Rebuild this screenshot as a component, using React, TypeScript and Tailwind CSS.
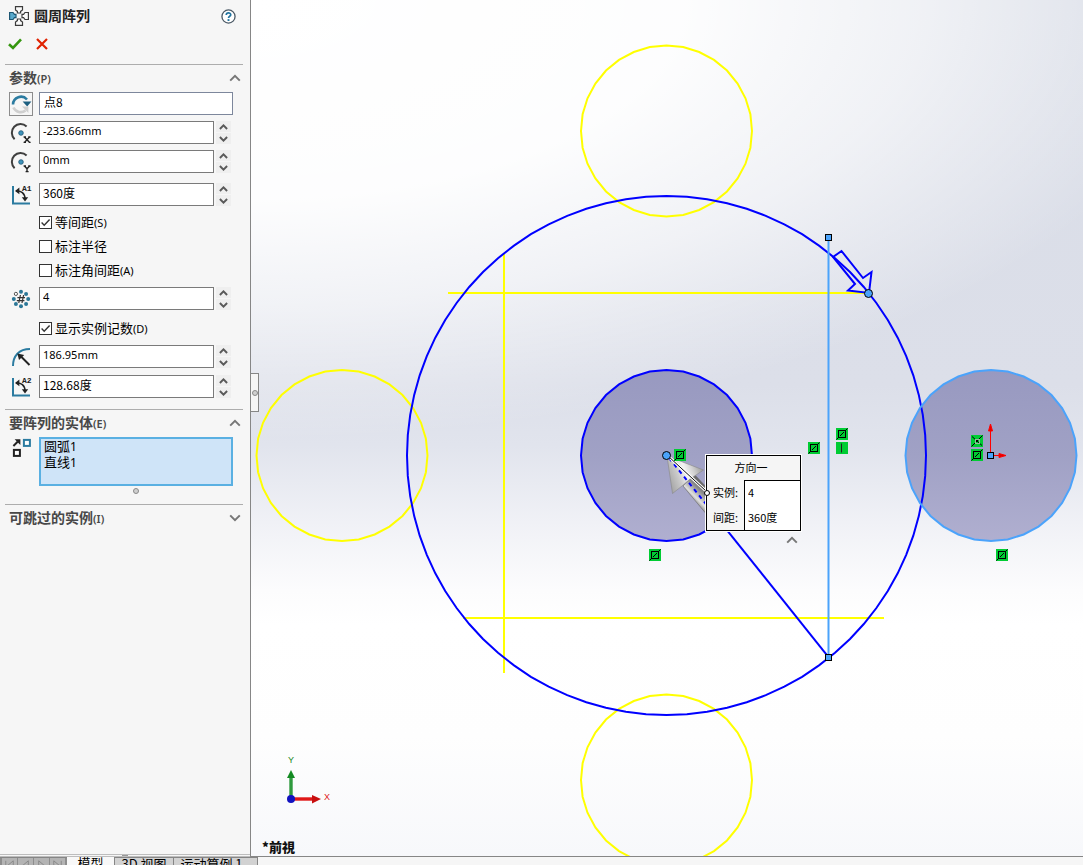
import React, { useState } from "react";

const UI_FONT = "font-['Noto_Sans','Noto_Sans_CJK_SC',sans-serif]";
const CJK_FONT = "font-['Noto_Sans_CJK_SC',sans-serif]";

/* ---------- small glyphs ---------- */

function Chevron({ up, small }: { up?: boolean; small?: boolean }) {
  return (
    <svg
      viewBox="0 0 12 8"
      className={small ? "h-[6px] w-[9px]" : "h-[8px] w-[12px]"}
      fill="none"
      stroke={small ? "#5a5a5a" : "#777777"}
      strokeWidth={small ? 2.6 : 2}
      aria-hidden="true"
    >
      <path d={up ? "M1.2 6.6L6 1.8L10.8 6.6" : "M1.2 1.4L6 6.2L10.8 1.4"} />
    </svg>
  );
}

function PatternIcon() {
  return (
    <svg viewBox="0 0 22 22" className="h-[22px] w-[22px]" fill="#fbfbfb" stroke="#3c3c3c" strokeWidth="1.2" aria-hidden="true">
      <path d="M7.5 1.6H14.5V5L12.6 6.4V8H9.4V6.4L7.5 5Z" />
      <path d="M7.5 20.4H14.5V17L12.6 15.6V14H9.4V15.6L7.5 17Z" />
      <path d="M20.4 7.5V14.5H17L15.6 12.6H14V9.4H15.6L17 7.5Z" />
      <path d="M1.6 7.5V14.5H5L6.4 12.6H8V9.4H6.4L5 7.5Z" fill="#58a9cc" stroke="#1d5673" />
    </svg>
  );
}

function RotateIcon() {
  return (
    <svg viewBox="0 0 22 22" className="h-[22px] w-[22px]" fill="none" aria-hidden="true">
      <path d="M3 11.5A8 8 0 0 1 17 6.5" stroke="#2b7ba0" strokeWidth="2.6" />
      <path d="M12.6 8.5H21.4L17.2 13.4Z" fill="#1d5f80" />
      <path d="M3.4 14.5A8 8 0 0 0 15.6 17.4" stroke="#cfcfcf" strokeWidth="2.6" />
      <path d="M12 13.6H18.4V20Z" fill="#cfcfcf" />
    </svg>
  );
}

function CenterIcon({ axis }: { axis: "X" | "Y" }) {
  return (
    <svg viewBox="0 0 22 22" className="h-[22px] w-[22px]" fill="none" aria-hidden="true">
      <path d="M4.6 17.2A8.2 8.2 0 0 1 16.6 4.4" stroke="#3f3f3f" strokeWidth="2" />
      <circle cx="11" cy="11" r="2.3" fill="#3f93bb" stroke="#1d5673" strokeWidth="0.8" />
      {axis === "X" ? (
        <path d="M14.4 15L19.6 20.4M19.6 15L14.4 20.4M13.6 15H16M18.2 15H20.6M13.6 20.4H16M18.2 20.4H20.6" stroke="#222" strokeWidth="1.4" />
      ) : (
        <path d="M14.4 15L17 17.8L19.6 15M17 17.5V20.8M13.6 15H16M18.2 15H20.6M15.6 20.6H18.6" stroke="#222" strokeWidth="1.4" />
      )}
    </svg>
  );
}

function AngleIcon({ index }: { index: string }) {
  return (
    <svg viewBox="0 0 22 22" className="h-[22px] w-[22px]" fill="none" aria-hidden="true">
      <path d="M3 2V19.5H20" stroke="#2b7ba0" strokeWidth="2" />
      <path d="M6 7C11 6.5 15 9 15 15" stroke="#222" strokeWidth="1.6" />
      <path d="M5 7L9.4 3.6V10.2Z" fill="#222" />
      <path d="M15 17.6L11.8 13.2H18.2Z" fill="#222" />
      <text x="12" y="7.4" fontSize="8" fontWeight="700" fill="#222" fontFamily="Liberation Mono, monospace">
        {"A" + index}
      </text>
    </svg>
  );
}

function CountIcon() {
  const dots = [0, 45, 90, 135, 180, 270, 315];
  return (
    <svg viewBox="0 0 22 22" className="h-[22px] w-[22px]" fill="none" aria-hidden="true">
      {dots.map((d) => (
        <circle
          key={d}
          cx={11 + 7.2 * Math.cos((d * Math.PI) / 180)}
          cy={11 + 7.2 * Math.sin((d * Math.PI) / 180)}
          r="2"
          fill="#2b7797"
        />
      ))}
      <circle cx="5.9" cy="5.9" r="1.6" fill="#fff" stroke="#555" />
      <path d="M10.4 7L8.8 15M13.6 7L12 15M7.4 9.6H15M6.8 12.6H14.4" stroke="#333" strokeWidth="1.2" />
    </svg>
  );
}

function RadiusIcon() {
  return (
    <svg viewBox="0 0 22 22" className="h-[22px] w-[22px]" fill="none" aria-hidden="true">
      <path d="M3 20C3 10 9 3 20 3" stroke="#2b7ba0" strokeWidth="2" />
      <path d="M19.5 19L11 10.5" stroke="#222" strokeWidth="2" />
      <path d="M7.4 7.4L14.2 9L9 14Z" fill="#222" />
    </svg>
  );
}

function EntitiesIcon() {
  return (
    <svg viewBox="0 0 22 22" className="h-[22px] w-[22px]" fill="none" aria-hidden="true">
      <path d="M3.4 9L7.6 4.8" stroke="#222" strokeWidth="2" />
      <path d="M4.6 2.2H10.4V8Z" fill="#222" />
      <rect x="13.9" y="2.9" width="6" height="6" fill="#fff" stroke="#2b7ba0" strokeWidth="2" />
      <rect x="3.9" y="12.9" width="6" height="6" fill="#fff" stroke="#222" strokeWidth="2" />
    </svg>
  );
}

/* ---------- property panel ---------- */

function Section({ title, hotkey, open, children }: { title: string; hotkey: string; open: boolean; children?: React.ReactNode }) {
  return (
    <section className="mr-[7px] ml-[5px] border-t border-[#adadad]">
      <button type="button" aria-expanded={open} className="flex h-[27px] w-full items-center justify-between pr-[2px] pb-px pl-[4px] text-left">
        <span className="text-[14px] leading-[20px] font-bold text-[#484848]">
          {title}
          <span className="text-[11px] font-semibold">({hotkey})</span>
        </span>
        <Chevron up={open} />
      </button>
      {children}
    </section>
  );
}

function NumberRow({ label, icon, initial, cjk, className = "" }: { label: string; icon: React.ReactNode; initial: string; cjk?: boolean; className?: string }) {
  const [value, setValue] = useState(initial);
  return (
    <div className={"flex h-[23px] items-center pr-[10px] pl-[4px] " + className}>
      <span className="mr-[6px] flex w-6 justify-center">{icon}</span>
      <input
        type="text"
        aria-label={label}
        value={value}
        onChange={(e) => setValue(e.target.value)}
        className={
          "h-[23px] min-w-0 flex-1 border border-[#7a7a7a] bg-white px-[3px] pb-[5px] text-black outline-none " +
          (cjk ? CJK_FONT + " text-[12px]" : "text-[11px]")
        }
      />
      <span className="ml-[2px] flex h-[23px] w-[17px] flex-col gap-px pr-[2px]">
        <button type="button" aria-label={label + " 增加"} className="flex flex-1 items-center justify-center bg-[#efefef]">
          <Chevron up small />
        </button>
        <button type="button" aria-label={label + " 减少"} className="flex flex-1 items-center justify-center bg-[#efefef]">
          <Chevron small />
        </button>
      </span>
    </div>
  );
}

function CheckRow({ label, hotkey, initial = false }: { label: string; hotkey?: string; initial?: boolean }) {
  const [checked, setChecked] = useState(initial);
  return (
    <label className="flex h-6 items-center gap-[3px] pl-[34px] text-[13px] leading-[18px] text-black">
      <span className="grid h-[13px] w-[13px]">
        <input
          type="checkbox"
          checked={checked}
          onChange={(e) => setChecked(e.target.checked)}
          className="col-start-1 row-start-1 h-[13px] w-[13px] appearance-none border border-[#333333] bg-white"
        />
        {checked && (
          <svg viewBox="0 0 13 13" className="pointer-events-none col-start-1 row-start-1 h-[13px] w-[13px]" fill="none" stroke="#333" strokeWidth="1.4" aria-hidden="true">
            <path d="M2.6 6.6L5.2 9.2L10.6 3.6" />
          </svg>
        )}
      </span>
      <span>
        {label}
        {hotkey && <span className="text-[11px]">({hotkey})</span>}
      </span>
    </label>
  );
}

function PropertyPanel() {
  const [point, setPoint] = useState("点8");
  return (
    <aside className="flex w-[251px] shrink-0 flex-col border-r border-[#868686] bg-[#f6f6f6]">
      <div className="flex-1">
        <header className="mb-2">
          <div className="flex h-8 items-center pr-[14px] pl-[8px]">
            <PatternIcon />
            <h1 className="ml-[4px] flex-1 text-[14px] leading-[20px] font-bold text-[#222]">圆周阵列</h1>
            <button type="button" aria-label="帮助">
              <svg viewBox="0 0 16 16" className="h-[15px] w-[15px]" fill="none" aria-hidden="true">
                <circle cx="8" cy="8" r="7" fill="#fff" stroke="#4c5a66" strokeWidth="1.4" />
                <path d="M5.6 6.3C5.6 3.4 10.4 3.4 10.4 6.2C10.4 7.8 8 7.8 8 9.6" stroke="#2475a0" strokeWidth="1.8" />
                <rect x="7" y="10.8" width="2" height="2" fill="#2475a0" />
              </svg>
            </button>
          </div>
          <div className="flex h-6 items-center gap-[14px] pl-[8px]">
            <button type="button" aria-label="确定">
              <svg viewBox="0 0 14 12" className="h-[12px] w-[14px]" fill="none" stroke="#35960f" strokeWidth="2.6" aria-hidden="true">
                <path d="M1 6.2L5 10L13 1.4" />
              </svg>
            </button>
            <button type="button" aria-label="取消">
              <svg viewBox="0 0 12 12" className="h-[12px] w-[12px]" fill="none" stroke="#e02200" strokeWidth="2.2" aria-hidden="true">
                <path d="M1 1L11 11M11 1L1 11" />
              </svg>
            </button>
          </div>
        </header>

        <Section title="参数" hotkey="P" open>
          <div className="flex h-[23px] items-center pr-[10px] pl-[4px]">
            <button type="button" aria-label="反向" className="mr-[6px] flex h-6 w-6 items-center justify-center border border-[#8c8c8c] bg-[#f6f6f6]">
              <RotateIcon />
            </button>
            <input
              type="text"
              aria-label="阵列中心"
              value={point}
              onChange={(e) => setPoint(e.target.value)}
              className={CJK_FONT + " h-[23px] min-w-0 flex-1 border border-[#7d879c] bg-white px-[4px] pb-[5px] text-[12px] text-black outline-none"}
            />
          </div>
          <NumberRow className="mt-[6px]" label="中心点 X" icon={<CenterIcon axis="X" />} initial="-233.66mm" />
          <NumberRow className="mt-[6px]" label="中心点 Y" icon={<CenterIcon axis="Y" />} initial="0mm" />
          <NumberRow className="mt-[10px] mb-[4px]" label="间距" icon={<AngleIcon index="1" />} initial="360度" cjk />
          <CheckRow label="等间距" hotkey="S" initial />
          <CheckRow label="标注半径" />
          <CheckRow label="标注角间距" hotkey="A" />
          <NumberRow className="mt-[5px] mb-[6px]" label="实例数" icon={<CountIcon />} initial="4" />
          <CheckRow label="显示实例记数" hotkey="D" initial />
          <NumberRow className="mt-[5px]" label="半径" icon={<RadiusIcon />} initial="186.95mm" />
          <NumberRow className="mt-[7px] mb-[11px]" label="圆弧角度" icon={<AngleIcon index="2" />} initial="128.68度" cjk />
        </Section>

        <Section title="要阵列的实体" hotkey="E" open>
          <div className="flex items-start pr-[10px] pl-[4px]">
            <span className="mr-[6px] flex w-6 justify-center">
              <EntitiesIcon />
            </span>
            <ul className="flex h-[49px] flex-1 flex-col border-2 border-[#5ab0e2] bg-[#cfe4f8] px-[3px] text-[13px] leading-[16px] text-black">
              <li className="-mt-px h-[16px]">
                圆弧<span className="text-[12px]">1</span>
              </li>
              <li className="h-[16px]">
                直线<span className="text-[12px]">1</span>
              </li>
            </ul>
          </div>
          <div className="mb-[9px] flex h-[9px] items-center justify-center pr-[10px] pl-[34px]">
            <span className="h-[6px] w-[6px] rounded-full border border-[#8a8a8a] bg-[#d0d0d0]" />
          </div>
        </Section>

        <Section title="可跳过的实例" hotkey="I" open={false} />
      </div>
      <div className="flex h-[3px] justify-center border-y border-[#bdbdbd]">
        <span className="h-px w-[6px] bg-[#999999]" />
      </div>
    </aside>
  );
}

/* ---------- sketch area ---------- */

function facets(cx: number, cy: number, r: number, n: number) {
  return Array.from({ length: n }, (_, i) => {
    const a = (2 * Math.PI * i) / n;
    return (cx + r * Math.cos(a)).toFixed(1) + "," + (cy + r * Math.sin(a)).toFixed(1);
  }).join(" ");
}

function Relation({ x, y, kind = "coincident" }: { x: number; y: number; kind?: "coincident" | "vertical" | "intersect" }) {
  return (
    <g transform={`translate(${x} ${y})`} fill="none" stroke="#000">
      <rect width="12" height="12" fill="#00cc33" stroke="none" />
      {kind === "coincident" && (
        <>
          <rect x="2.5" y="2.5" width="7" height="7" />
          <path d="M0.5 11.5L2.5 9.5M4 8L8 4M9.5 2.5L11.5 0.5" />
        </>
      )}
      {kind === "vertical" && <path d="M5.5 1.5V10.5" stroke="#222" />}
      {kind === "intersect" && (
        <>
          <path d="M0.5 11.5L11.5 0.5M1 1.5L11 10.5" />
          <rect x="4.5" y="4.5" width="4" height="4" stroke="#9ab89a" />
        </>
      )}
    </g>
  );
}

function Sketch() {
  return (
    <svg className="absolute inset-0 h-full w-full" fill="none" role="img" aria-label="草图">
      <defs>
        <linearGradient id="face" x1="0" y1="0" x2="0" y2="1">
          <stop offset="0" stopColor="#9899c0" />
          <stop offset="0.5" stopColor="#a0a1c5" />
          <stop offset="1" stopColor="#b0afd0" />
        </linearGradient>
        <linearGradient id="head" x1="0" y1="0.6" x2="1" y2="0.2">
          <stop offset="0" stopColor="#a4a4a4" />
          <stop offset="0.3" stopColor="#cccccc" />
          <stop offset="0.5" stopColor="#f4f4f4" />
          <stop offset="0.7" stopColor="#cfcfcf" />
          <stop offset="1" stopColor="#8d8d8d" />
        </linearGradient>
        <linearGradient id="shaft" gradientUnits="userSpaceOnUse" x1="688" y1="498" x2="702" y2="484">
          <stop offset="0" stopColor="#777" />
          <stop offset="0.3" stopColor="#e0e0e0" />
          <stop offset="0.7" stopColor="#8a8a8a" />
          <stop offset="1" stopColor="#6a6a6a" />
        </linearGradient>
      </defs>
      <g transform="translate(-251 0)">
        <polygon points={facets(991, 455.5, 85.5, 32)} fill="url(#face)" />
        <polygon points={facets(666.5, 455.5, 85.5, 32)} fill="url(#face)" stroke="#0000ff" strokeWidth="2" />

        <g stroke="#ffff00" strokeWidth="2">
          <polygon points={facets(666.5, 131, 85.5, 32)} />
          <polygon points={facets(342, 455.5, 85.5, 32)} />
          <polygon points={facets(666.5, 780, 85.5, 32)} />
          <path d="M448 293H868M463 618H884M504 254V673" />
        </g>

        <polygon points={facets(666.5, 455.5, 259.5, 80)} stroke="#0000ff" strokeWidth="2" />
        <polygon points={facets(991, 455.5, 85.5, 32)} stroke="#4ba3fb" strokeWidth="2" />
        <path d="M828.5 657L706 504" stroke="#0000ff" strokeWidth="2" />
        <path d="M828.5 238V657" stroke="#4ba3fb" strokeWidth="2" />
        <path d="M833 257L841.5 251L863 278L871.5 272L869 293L848 290.5L855 284Z" stroke="#0000ff" strokeWidth="2" />

        <path d="M683 486L694 474L708 489V516Z" fill="url(#shaft)" stroke="#666" strokeWidth="0.6" />
        <path d="M667 456L703.5 470L690 479L682 486L672.5 493.5Z" fill="url(#head)" stroke="#888" strokeWidth="0.6" />
        <path d="M669 458L706 504" stroke="#0000ff" strokeWidth="2" strokeDasharray="4 4" />
        <path d="M668 456L706 491" stroke="#fff" strokeWidth="3" />
        <path d="M668 456L706 491" stroke="#111" strokeWidth="1" />

        <g fill="#4ba3fb" stroke="#000">
          <circle cx="666.5" cy="455.5" r="4" />
          <circle cx="868.5" cy="293.5" r="4" />
          <rect x="825.5" y="234.5" width="6" height="6" />
          <rect x="825.5" y="654.5" width="6" height="6" />
        </g>

        <g stroke="#ff0000" fill="#e60000">
          <path d="M990.5 452V431M994 455.5H1000" />
          <path d="M990.5 424L992.5 431H988.5ZM1006 455.5L999 453.5V457.5Z" />
        </g>
        <rect x="987.5" y="452.5" width="6" height="6" fill="#4ba3fb" stroke="#000" />

        <Relation x={674} y={449} />
        <Relation x={808} y={442} />
        <Relation x={836} y={428} />
        <Relation x={836} y={442} kind="vertical" />
        <Relation x={649} y={549} />
        <Relation x={971} y={435} kind="intersect" />
        <Relation x={971} y={449} />
        <Relation x={996} y={549} />

        <path d="M291 799V778" stroke="#2f9a3e" strokeWidth="3.4" />
        <path d="M291 770L295 778H287Z" fill="#138a22" />
        <path d="M291 799H313" stroke="#e01818" strokeWidth="3.4" />
        <path d="M321 799L312 795V803.4Z" fill="#c80f0f" />
        <circle cx="291" cy="799" r="4" fill="#1212c0" />
        <text x="288" y="763" fontSize="9" fill="#1b8a1b" fontFamily="Liberation Sans, sans-serif">Y</text>
        <text x="324" y="800" fontSize="9" fill="#e02020" fontFamily="Liberation Sans, sans-serif">X</text>
      </g>
    </svg>
  );
}

function Callout() {
  const [count, setCount] = useState("4");
  const [angle, setAngle] = useState("360度");
  return (
    <div className={CJK_FONT + " absolute top-[455px] left-[455px] w-[95px] text-[11px] leading-[16px] text-black"}>
      <div className="grid h-[76px] grid-cols-[37px_1fr] grid-rows-[24px_1fr_1fr] items-center border border-black bg-[#f5f5f5] outline outline-white">
        <span className="col-span-2 pr-[5px] pb-[2px] text-center">方向一</span>
        <label htmlFor="call-count" className="pb-[2px] pl-[6px] whitespace-nowrap">实例:</label>
        <input
          id="call-count"
          value={count}
          onChange={(e) => setCount(e.target.value)}
          className="h-full w-full min-w-0 border-t border-l border-black bg-white pb-[2px] pl-[3px] outline-none"
        />
        <label htmlFor="call-angle" className="pb-[2px] pl-[6px] whitespace-nowrap">间距:</label>
        <input
          id="call-angle"
          value={angle}
          onChange={(e) => setAngle(e.target.value)}
          className="h-full w-full min-w-0 border-l border-black bg-white pb-[2px] pl-[3px] outline-none"
        />
      </div>
      <span className="absolute top-[35px] -left-[2px] h-[6px] w-[6px] rounded-full border border-black bg-white" />
      <button type="button" aria-label="收起" className="ml-auto flex h-[18px] w-[18px] items-center justify-center">
        <Chevron up />
      </button>
    </div>
  );
}

function Viewport() {
  return (
    <main className="relative min-w-0 flex-1 overflow-hidden border-b border-[#868686] bg-[radial-gradient(ellipse_960px_440px_at_0%_0%,#ffffff_0%,#fffffff2_45%,#ffffff99_70%,#ffffff00_100%),linear-gradient(to_bottom,#d9dde7_0%,#dcdfe9_45%,#e1e4ed_52%,#f0f1f6_61%,#fcfcfd_69%,#ffffff_73%,#fefefe_86%,#f7f8fb_100%)]">
      <Sketch />
      <div className="absolute top-[373px] left-0 flex h-[39px] w-[8px] items-center justify-center border-y border-r border-[#868686] bg-[#f6f6f6]">
        <span className="h-[6px] w-[6px] rounded-full border border-[#8a8a8a] bg-[#d0d0d0]" />
      </div>
      <Callout />
      <p className="absolute bottom-0 left-[11px] font-['Noto_Sans_CJK_TC',sans-serif] text-[13px] leading-[18px] font-black text-[#111]">*前視</p>
    </main>
  );
}

/* ---------- bottom tabs ---------- */

function BottomTabs() {
  const tab = "flex shrink-0 items-start justify-center border-r border-[#868686] text-[13px] leading-[12px] whitespace-nowrap text-black ";
  return (
    <nav className={CJK_FONT + " flex h-[8px] shrink-0 items-start overflow-hidden bg-[#f6f6f6]"}>
      <div className="flex h-[16px] w-[67px] shrink-0 gap-px border-t border-[#868686] bg-[#8e8e8e] pl-[2px]">
        {["M4 3V12M12 3L6 8L12 13Z", "M11 3L5 8L11 13Z", "M5 3L11 8L5 13Z", "M12 3V12M4 3L10 8L4 13Z"].map((d, i) => (
          <button key={i} type="button" aria-label={["第一页", "上一页", "下一页", "最后一页"][i]} className="h-[15px] w-[15px] bg-[#b4b4b4]">
            <svg viewBox="0 0 16 16" className="h-[15px] w-[15px]" fill="none" stroke="#888888" aria-hidden="true">
              <path d={d} />
            </svg>
          </button>
        ))}
      </div>
      <button type="button" className={tab + "h-[16px] w-[48px] bg-[#f8f8f8]"}>模型</button>
      <button type="button" className={tab + "h-[16px] w-[59px] border-t bg-[#d2d2d2]"}>3D 视图</button>
      <button type="button" className={tab + "h-[16px] w-[84px] border-t bg-[#d2d2d2] pr-[8px]"}>运动算例 1</button>
    </nav>
  );
}

export default function App() {
  return (
    <div className={UI_FONT + " flex h-screen flex-col overflow-hidden bg-white"}>
      <div className="flex min-h-0 flex-1">
        <PropertyPanel />
        <Viewport />
      </div>
      <BottomTabs />
    </div>
  );
}
